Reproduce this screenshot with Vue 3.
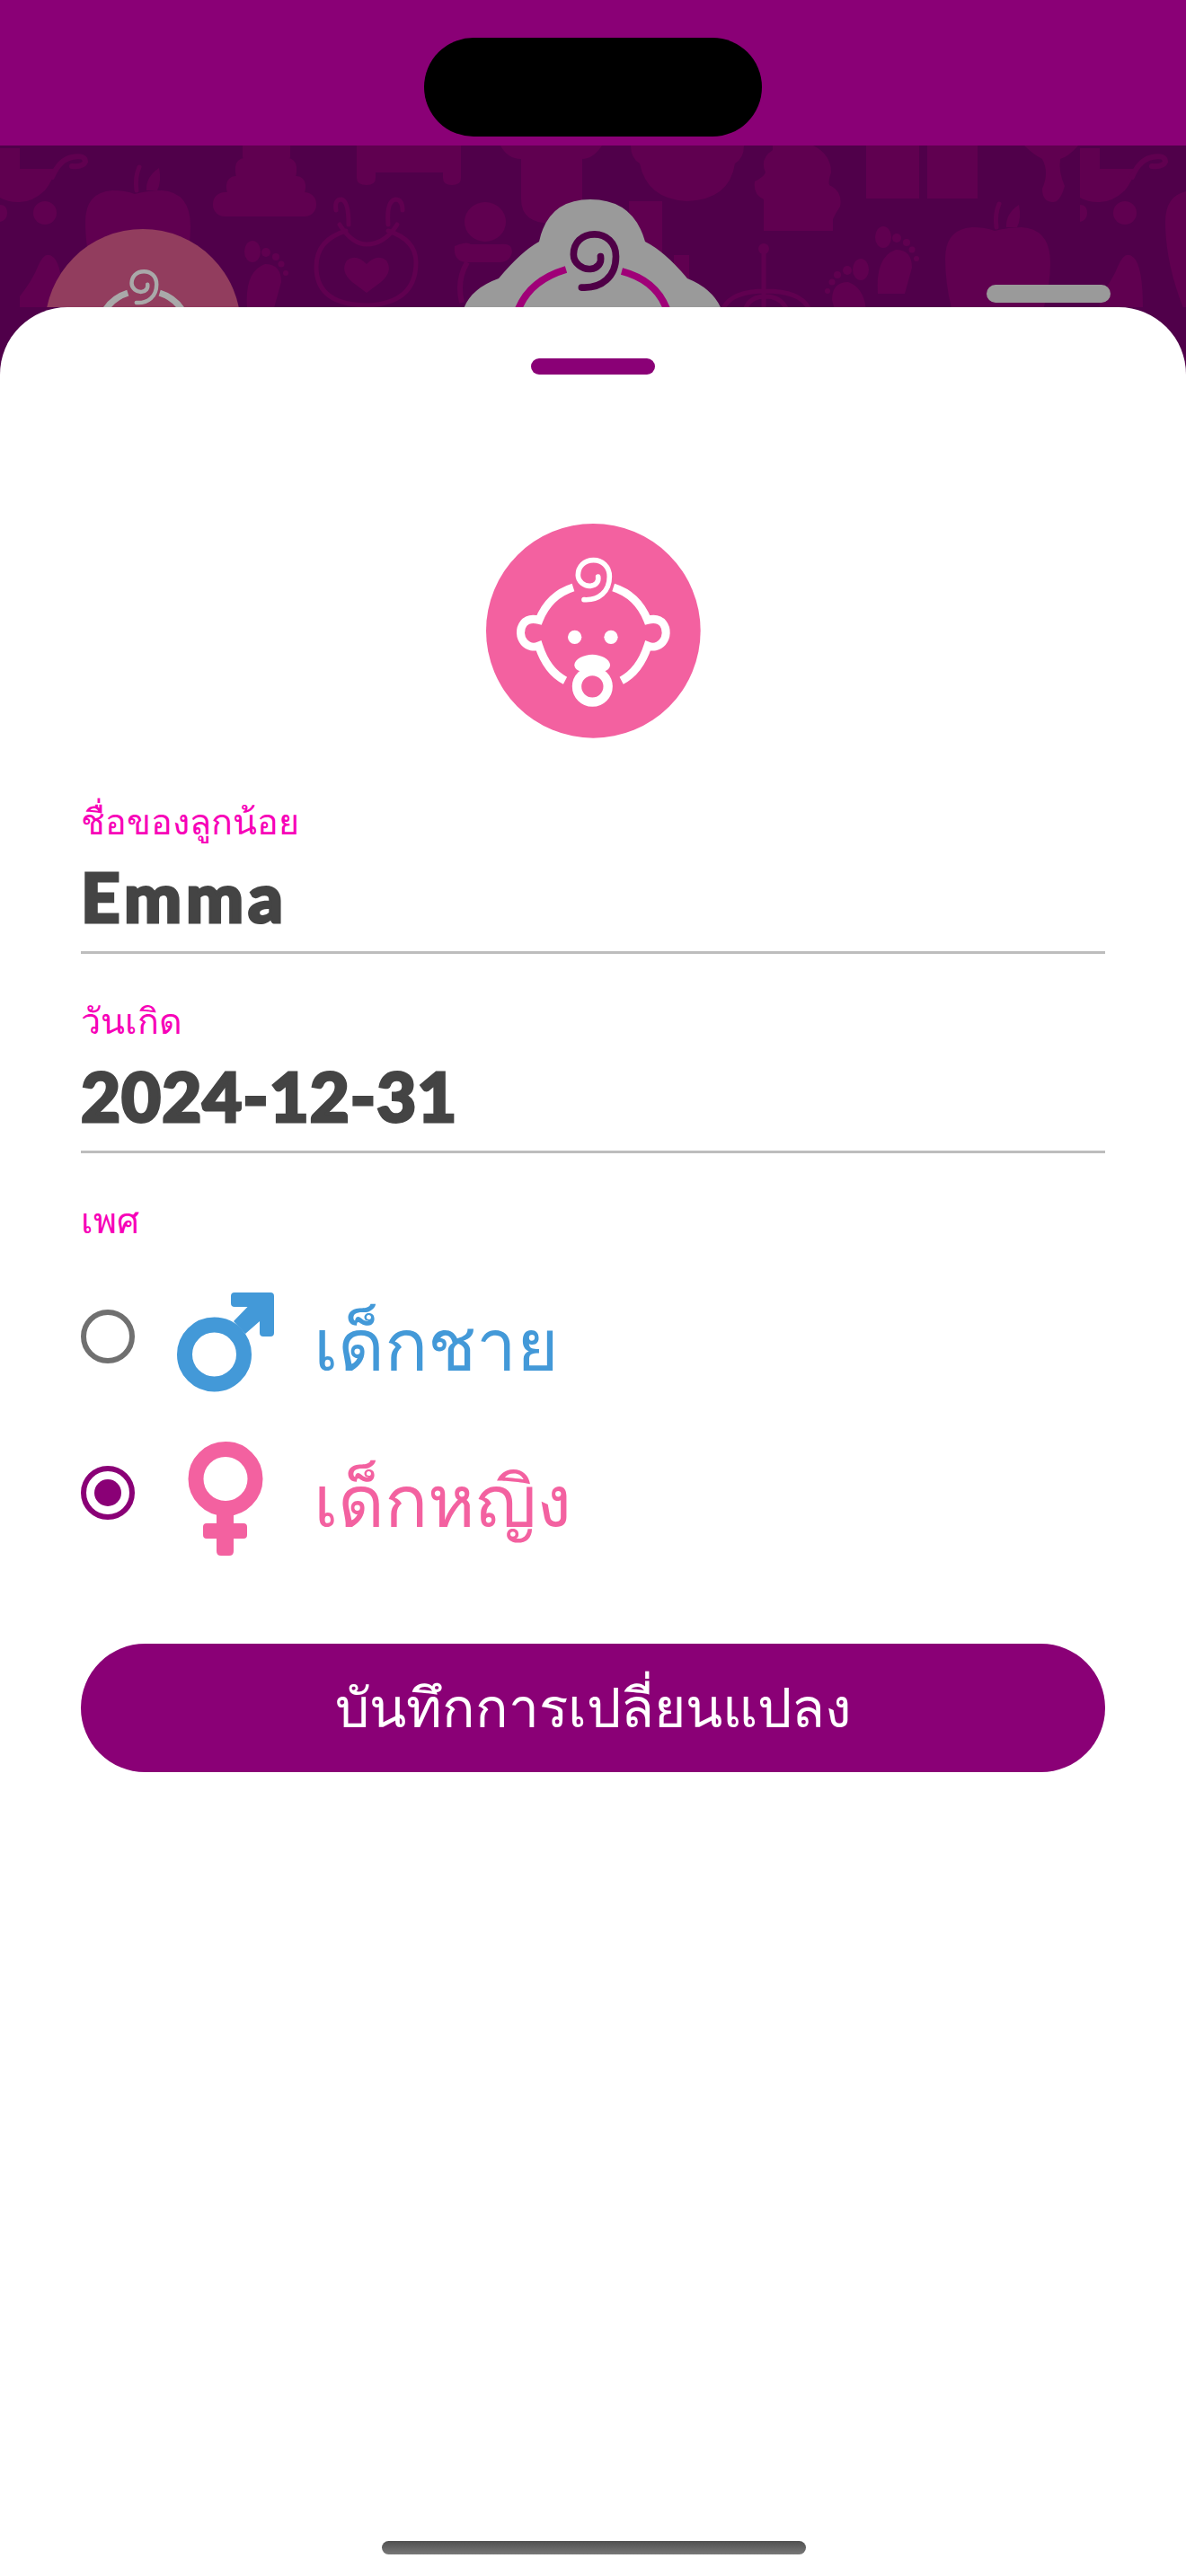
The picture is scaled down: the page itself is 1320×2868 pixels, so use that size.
<template>
  <div class="phone">
    <header class="statusbar">
      <div class="island"></div>
    </header>

    <div class="backdrop">
      <svg class="pattern" width="1320" height="181" viewBox="0 0 1320 181" fill="#600050">
        <defs>
          <g id="tile">
            <!-- stroller -->
            <path d="M0 3H22V26H62Q58 40 50 50Q35 64 20 63Q8 63 0 58Z" />
            <path d="M58 35Q66 16 80 13Q95 10 95 18Q93 24 80 23" fill="none" stroke="#600050" stroke-width="6" stroke-linecap="round" />
            <circle cx="50" cy="75" r="13" />
            <path d="M0 66Q8 66 8 75Q8 83 0 85Z" />
            <!-- bottle -->
            <path d="M22 168Q36 150 42 135Q50 115 60 125Q70 135 70 181H22Z" />
          </g>
          <g id="apple">
            <path d="M95 85Q95 52 125 50Q140 50 150 54Q165 50 180 50Q212 52 212 90Q212 130 190 181H115Q95 130 95 85Z" />
            <path d="M152 50Q150 35 155 24" fill="none" stroke="#600050" stroke-width="5" stroke-linecap="round" />
            <path d="M163 50Q162 35 177 25Q180 40 175 50Z" />
          </g>
          <g id="foot">
            <ellipse cx="281" cy="118" rx="9" ry="12" />
            <circle cx="296" cy="119" r="5" />
            <circle cx="307" cy="124" r="4" />
            <circle cx="313" cy="132" r="3.5" />
            <circle cx="318" cy="142" r="3" />
            <path d="M275 181Q272 140 295 132Q313 132 313 152Q308 170 305 181Z" />
          </g>
        </defs>

        <use href="#tile" />
        <use href="#tile" x="1202" />
        <use href="#apple" />
        <use href="#apple" x="957" y="41" />
        <use href="#apple" x="1202" />
        <use href="#foot" />
        <use href="#foot" x="702" y="-16" />
        <use href="#foot" transform="translate(1239,20) scale(-1,1)" />

        <!-- cake -->
        <rect x="270" y="-10" width="53" height="30" rx="8" />
        <rect x="262" y="14" width="68" height="26" rx="10" />
        <rect x="252" y="34" width="88" height="24" rx="10" />
        <rect x="237" y="52" width="115" height="27" rx="13" />
        <!-- crib -->
        <path d="M397 0H513V36Q513 44 503 44Q493 44 493 36V30H418V36Q418 44 408 44Q397 44 397 36Z" />
        <!-- bib -->
        <g fill="none" stroke="#600050" stroke-width="5" stroke-linecap="round">
          <path d="M378 88Q392 110 408 110Q428 110 442 88" />
          <path d="M374 72Q372 60 380 60Q388 62 388 88" />
          <path d="M432 88Q430 62 440 60Q448 60 448 72" />
          <path d="M385 95Q352 105 352 135Q352 178 410 178Q463 175 463 130Q463 105 432 95" />
        </g>
        <path d="M408 132Q396 120 386 128Q378 140 392 152L408 164L424 152Q438 140 430 128Q420 120 408 132Z" />
        <!-- bottle with flanks -->
        <path d="M557 0H670Q660 15 648 15V60Q648 87 615 87Q580 87 580 60V15Q565 15 557 0Z" />
        <!-- bear -->
        <path d="M702 0H828Q828 14 818 20Q812 60 765 62Q720 60 712 20Q702 14 702 0Z" />
        <path d="M700 62H737V130H700ZM750 122H767V160H750Z" />
        <!-- pacifier -->
        <ellipse cx="540" cy="85" rx="23" ry="22" />
        <path d="M506 112Q520 106 524 110H556Q570 108 570 118Q568 130 556 130H518Q504 128 506 112Z" />
        <path d="M520 130Q508 150 514 175" fill="none" stroke="#600050" stroke-width="6" />
        <!-- cake 2 -->
        <path d="M860 0H905Q925 10 925 30Q920 45 925 45Q938 52 935 68Q930 75 927 82V95H850V60Q838 55 840 40Q850 35 852 30Q845 15 860 5Z" />
        <!-- mobile -->
        <circle cx="850" cy="115" r="6" />
        <path d="M850 115V181M805 181Q815 162 852 162Q890 162 900 181M830 181Q835 168 852 168Q868 168 875 181" fill="none" stroke="#600050" stroke-width="5" />
        <!-- blocks -->
        <path d="M964 0H1023V59H964ZM1032 0H1088V59H1032Z" />
        <!-- spoon -->
        <path d="M1140 0H1200Q1190 12 1180 15Q1178 30 1185 45Q1180 63 1172 63Q1160 63 1160 48Q1168 30 1160 15Q1150 10 1140 0Z" />
      </svg>

      <div class="peek-avatar">
        <svg width="220" height="220" viewBox="0 0 220 220" color="#a9a9a9">
          <use href="#baby-face" transform="translate(-17,-3) scale(0.264)" />
        </svg>
      </div>

      <svg class="peek-logo" width="290" height="122" viewBox="515 59 290 122">
        <path d="M515 185Q522 160 555 148Q580 118 600 107Q610 60 657 60Q705 60 718 107Q740 118 765 148Q795 160 804 185Z" fill="#9a9a9a" />
        <path d="M630 138Q590 150 577 182M692 140Q730 150 742 182" fill="none" stroke="#a00078" stroke-width="8" />
        <g transform="translate(445.3,13.5) scale(0.449)" fill="none" stroke="#4f0047" stroke-width="17" stroke-linecap="round">
          <path :d="swirl" />
        </g>
      </svg>

      <div class="drag-pill"></div>
    </div>

    <main class="sheet">
      <div class="handle"></div>

      <div class="avatar">
        <svg width="239" height="239" viewBox="123 68 717 717" color="#fff">
          <defs>
            <g id="baby-face">
              <g fill="none" stroke="currentColor" stroke-width="27">
                <path d="M414 281C360 298 322 335 300 390C285 386 262 384 248 402C234 420 236 448 250 464C264 480 284 482 299 476C318 535 345 570 387 592" />
                <path d="M548 281C602 298 640 335 662 390C677 386 700 384 714 402C728 420 726 448 712 464C698 480 678 482 663 476C644 535 617 570 575 592" />
                <path d="M450 322C500 325 535 295 535 245C535 210 510 190 482 190C450 190 430 212 430 240C430 262 452 278 472 276C490 274 500 262 497 245" stroke-width="17" stroke-linecap="round" />
              </g>
              <circle cx="419" cy="447" r="23" fill="currentColor" />
              <circle cx="540" cy="447" r="23" fill="currentColor" />
              <path d="M478 505C505 505 537 520 537 540C537 558 520 565 478 565C436 565 418 558 418 540C418 520 450 505 478 505Z" fill="currentColor" />
              <circle cx="478" cy="612" r="52" fill="none" stroke="currentColor" stroke-width="31" />
            </g>
          </defs>
          <circle cx="481" cy="426" r="358" fill="#f361a0" />
          <use href="#baby-face" />
        </svg>
      </div>

      <section class="form">
        <div class="field">
          <label class="field-label">ชื่อของลูกน้อย</label>
          <div class="field-value name">Emma</div>
        </div>

        <div class="field">
          <label class="field-label">วันเกิด</label>
          <div class="field-value date">2024-12-31</div>
        </div>

        <div class="field gender">
          <label class="field-label">เพศ</label>

          <div class="gender-row boy">
            <span class="radio"></span>
            <span class="icon-box">
              <svg width="108" height="111" viewBox="0 0 108 111" fill="none">
                <circle cx="41.5" cy="69" r="33" stroke="#4399d8" stroke-width="17" />
                <path d="M64 0H104Q108 0 108 4V45Q108 49 104 49H96Q92 49 92 45V32L76 46L63 32L78.5 16H64Q60 16 60 12V4Q60 0 64 0Z" fill="#4399d8" />
              </svg>
            </span>
            <span class="gender-name">เด็กชาย</span>
          </div>

          <div class="gender-row girl">
            <span class="radio checked"></span>
            <span class="icon-box">
              <svg width="84" height="127" viewBox="0 0 84 127" fill="none">
                <circle cx="42" cy="41.5" r="33" stroke="#f361a0" stroke-width="17" />
                <path d="M32 78H51V91H62Q66 91 66 95V104Q66 108 62 108H51V122Q51 127 46 127H37Q32 127 32 122V108H21Q17 108 17 104V95Q17 91 21 91H32Z" fill="#f361a0" />
              </svg>
            </span>
            <span class="gender-name">เด็กหญิง</span>
          </div>
        </div>

        <button class="save-btn">บันทึกการเปลี่ยนแปลง</button>
      </section>

      <div class="home-indicator"></div>
    </main>
  </div>
</template>

<script setup>
const swirl = "M450 322C500 325 535 295 535 245C535 210 510 190 482 190C450 190 430 212 430 240C430 262 452 278 472 276C490 274 500 262 497 245"
</script>

<style>
html, body {
  margin: 0;
  background: #fff;
}
</style>

<style scoped>
* {
  box-sizing: border-box;
}

.phone {
  width: 1320px;
  height: 2868px;
  overflow: hidden;
  display: flex;
  flex-direction: column;
  font-family: "Liberation Sans", "DejaVu Sans", "Noto Sans", sans-serif;
  background: #50004a;
}

/* Status bar */
.statusbar {
  height: 162px;
  flex: none;
  background: #8a0076;
  padding-top: 42px;
  display: flex;
  justify-content: center;
}

.island {
  width: 376px;
  height: 110px;
  border-radius: 55px;
  background: #000;
}

/* Dimmed screen behind the sheet */
.backdrop {
  height: 180px;
  flex: none;
  position: relative;
  overflow: hidden;
  background: #50004a;
}

.pattern {
  position: absolute;
  left: 0;
  top: 0;
}

.peek-avatar {
  position: absolute;
  left: 50px;
  top: 93px;
  width: 218px;
  height: 218px;
  border-radius: 50%;
  background: #923d5e;
}

.peek-logo {
  position: absolute;
  left: 515px;
  top: 59px;
}

.drag-pill {
  position: absolute;
  left: 1098px;
  top: 155px;
  width: 138px;
  height: 20px;
  border-radius: 10px;
  background: #9a9a9a;
}

/* Bottom sheet */
.sheet {
  flex: 1;
  background: #fff;
  border-radius: 75px 75px 0 0;
  display: flex;
  flex-direction: column;
  align-items: center;
  padding-top: 57px;
  position: relative;
}

.handle {
  width: 138px;
  height: 18px;
  border-radius: 9px;
  background: #8a0076;
}

.avatar {
  margin-top: 166px;
  height: 239px;
}

.form {
  width: 1140px;
  margin-top: 62px;
  display: flex;
  flex-direction: column;
}

.field {
  border-bottom: 3px solid #bdbdbd;
  height: 178px;
  margin-bottom: 44px;
  padding-top: 8px;
}

.field-label {
  display: block;
  color: #f700b8;
  font-size: 39.5px;
  line-height: 46px;
}

.field-value {
  margin-top: 17px;
  color: #444;
  font-family: Lato, "Liberation Sans", sans-serif;
  font-weight: 900;
  font-size: 76px;
  line-height: 86px;
  -webkit-text-stroke: 3px #444;
}

.name {
  letter-spacing: 5px;
}

.date {
  letter-spacing: 1px;
}

.gender {
  border-bottom: none;
  height: auto;
  margin-bottom: 0;
}

.gender-row {
  display: flex;
  align-items: center;
  height: 174px;
}

.boy {
  margin-top: 19px;
  color: #4399d8;
}

.girl {
  color: #f361a0;
}

.radio {
  width: 60px;
  height: 60px;
  border-radius: 50%;
  border: 6px solid #707070;
  flex: none;
  display: flex;
  align-items: center;
  justify-content: center;
}

.radio.checked {
  border-color: #8a0076;
}

.radio.checked::after {
  content: "";
  width: 30px;
  height: 30px;
  border-radius: 50%;
  background: #8a0076;
}

.icon-box {
  flex: none;
  width: 108px;
  margin-left: 47px;
  margin-top: 12px;
  display: flex;
  justify-content: center;
}

.gender-name {
  margin-left: 44px;
  margin-top: 18px;
  font-size: 80px;
}

.save-btn {
  margin-top: 81px;
  height: 143px;
  border: none;
  border-radius: 72px;
  background: #8a0076;
  color: #fff;
  font-family: inherit;
  font-size: 60.5px;
}

.home-indicator {
  position: absolute;
  bottom: 24px;
  left: 425px;
  width: 472px;
  height: 15px;
  border-radius: 8px;
  background: linear-gradient(#505050, #787878);
}
</style>
